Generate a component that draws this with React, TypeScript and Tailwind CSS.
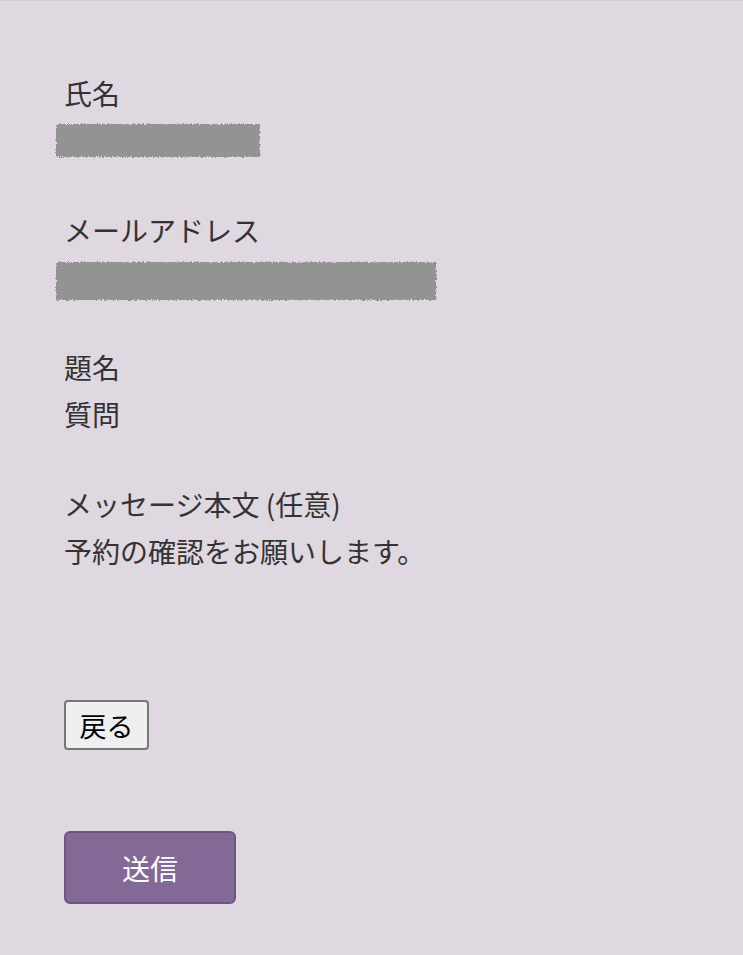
const font = { fontFamily: '"Noto Sans CJK JP", "Noto Sans", sans-serif' };

function Redacted({ width, height }: { width: string; height: string }) {
  return (
    <div className="flex h-[47px] items-center -ml-[8px]">
      <div className={`${width} ${height} bg-[#939393] [filter:url(#rough)]`} />
    </div>
  );
}

function Field({ label, children }: { label: string; children: React.ReactNode }) {
  return (
    <div className="mb-[43px]">
      <p className="h-[47px] leading-[47px]">{label}</p>
      {children}
    </div>
  );
}

export default function App() {
  return (
    <div
      className="min-h-[955px] w-full bg-[#dfd8e0] border-t border-[#d2c9d4] pl-[64px] pt-[69px] text-[28px] text-[#333333]"
      style={font}
    >
      {/* scribble edge for the blacked-out values */}
      <svg width="0" height="0" className="absolute">
        <filter id="rough">
          <feTurbulence type="fractalNoise" baseFrequency="0.6" numOctaves="2" result="noise" />
          <feDisplacementMap in="SourceGraphic" in2="noise" scale="4" />
        </filter>
      </svg>

      <Field label="氏名">
        <Redacted width="w-[204px]" height="h-[33px]" />
      </Field>
      <Field label="メールアドレス">
        <Redacted width="w-[380px]" height="h-[38px] mt-[6px]" />
      </Field>
      <Field label="題名">
        <p className="h-[47px] leading-[47px]">質問</p>
      </Field>
      <Field label="メッセージ本文 (任意)">
        <p className="h-[47px] leading-[47px]">予約の確認をお願いします。</p>
      </Field>

      <div className="pt-[82px]">
        <button
          type="button"
          className="h-[50px] w-[85px] rounded-[4px] border-2 border-[#777777] bg-[#efefef] text-[27px] leading-none text-black"
          style={font}
        >
          戻る
        </button>
      </div>

      <div className="pt-[81px]">
        <button
          type="submit"
          className="h-[73px] w-[172px] rounded-[6px] border-2 border-[#6c5580] bg-[#836996] text-[28px] leading-none text-white"
          style={font}
        >
          送信
        </button>
      </div>
    </div>
  );
}
